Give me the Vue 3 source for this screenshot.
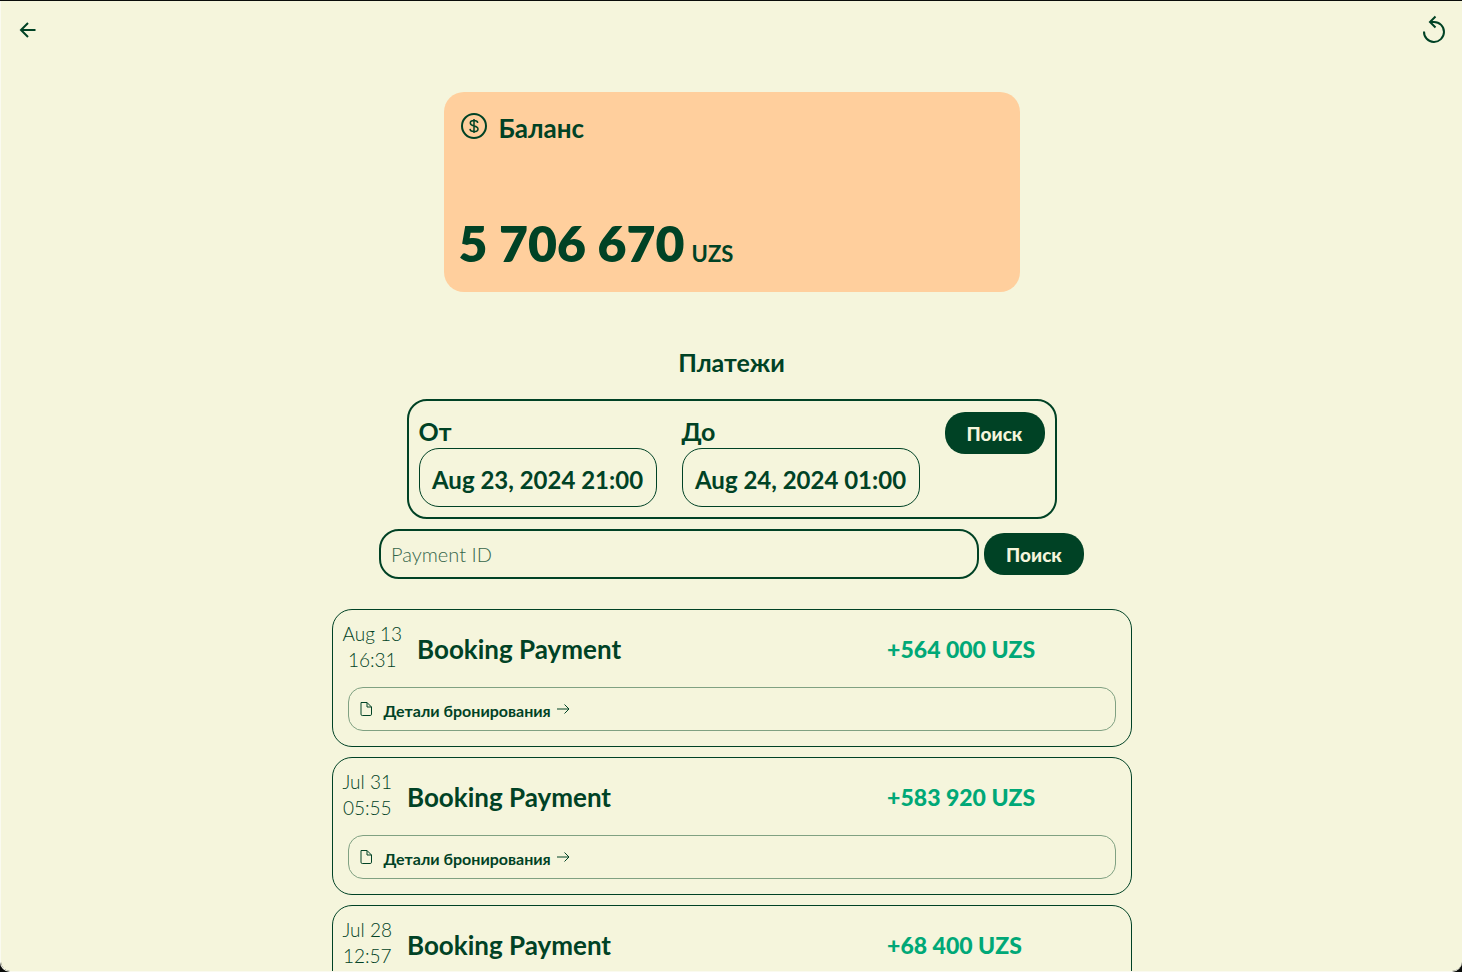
<script setup>
import { ref } from "vue";

const balance = ref("5 706 670");
const from = ref("Aug 23, 2024 21:00");
const to = ref("Aug 24, 2024 01:00");
const paymentId = ref("");

const payments = ref([
  { id: 1, day: "Aug 13", time: "16:31", amount: "+564 000 UZS" },
  { id: 2, day: "Jul 31", time: "05:55", amount: "+583 920 UZS" },
  { id: 3, day: "Jul 28", time: "12:57", amount: "+68 400 UZS" },
]);
</script>

<template>
  <div class="page">
    <header class="topbar">
      <button type="button" class="icon-btn" aria-label="Назад">
        <svg width="20" height="20" viewBox="0 0 20 20">
          <path d="M18.5 10H4M11 3L4 10L11 17" />
        </svg>
      </button>
      <button type="button" class="icon-btn" aria-label="Обновить">
        <svg width="28" height="30" viewBox="0 0 28 30">
          <path d="M4 16.5A10 10 0 1 0 14 6.9H10.5M15.5 1.5L10 7L15.5 12.5" />
        </svg>
      </button>
    </header>

    <main class="content">
      <section class="balance">
        <div class="balance-head">
          <svg width="28" height="28" viewBox="0 0 28 28">
            <circle cx="14" cy="14" r="12" />
            <path
              class="thin"
              d="M14 7V21M17.8 10.8C17.5 9.4 16 8.6 14 8.6C11.8 8.6 10.3 9.5 10.3 11C10.3 12.8 11.8 13.4 14 13.9C16.4 14.4 18 15.1 18 16.9C18 18.5 16.3 19.5 14 19.5C11.7 19.5 10.1 18.5 10 16.9"
            />
          </svg>
          <span>Баланс</span>
        </div>
        <p class="balance-sum">
          <span>{{ balance }}</span>
          <span class="currency">UZS</span>
        </p>
      </section>

      <h2 class="title">Платежи</h2>

      <form class="filter" @submit.prevent>
        <div class="field">
          <label for="from">От</label>
          <input id="from" v-model="from" type="text" />
        </div>
        <div class="field">
          <label for="to">До</label>
          <input id="to" v-model="to" type="text" />
        </div>
        <button type="submit" class="btn">Поиск</button>
      </form>

      <form class="search" @submit.prevent>
        <input
          v-model="paymentId"
          type="text"
          placeholder="Payment ID"
          aria-label="Payment ID"
        />
        <button type="submit" class="btn">Поиск</button>
      </form>

      <div class="list">
        <article v-for="item in payments" :key="item.id" class="payment">
          <div class="payment-row">
            <div class="date">
              <span>{{ item.day }}</span>
              <span>{{ item.time }}</span>
            </div>
            <h3 class="name">Booking Payment</h3>
            <span class="amount">{{ item.amount }}</span>
          </div>
          <a href="#" class="details">
            <svg width="16" height="16" viewBox="0 0 16 16">
              <path
                d="M3 1.5H9L13.5 6V13.2Q13.5 14.5 12.2 14.5H4.3Q3 14.5 3 13.2ZM9 1.5V6H13.5"
              />
            </svg>
            <span>Детали бронирования</span>
            <svg class="arrow" width="14" height="14" viewBox="0 0 14 14">
              <path d="M1 7H13M8.5 2.5L13 7L8.5 11.5" />
            </svg>
          </a>
        </article>
      </div>
    </main>
  </div>
</template>

<style>
body {
  background: #0a0c0a;
}
</style>

<style scoped>
.page {
  box-sizing: border-box;
  height: calc(100vh - 1px);
  margin-top: 1px;
  overflow-y: auto;
  scrollbar-width: none;
  border-left: 1px solid #fafaf0;
  border-bottom: 1px solid #fafaf0;
  border-radius: 0 0 10px 10px;
  background: #f5f5dc;
  color: #004225;
  font-family: Lato, "Liberation Sans", sans-serif;
  font-size: 26px;
  font-weight: 700;
}

svg {
  display: block;
  flex: none;
  fill: none;
  stroke: currentColor;
  stroke-width: 2;
}

input,
button {
  box-sizing: border-box;
  font-family: inherit;
  color: inherit;
  outline: none;
}

.topbar {
  display: flex;
  justify-content: space-between;
  align-items: center;
  height: 58px;
  padding: 0 14px 0 16px;
}

.icon-btn {
  padding: 0;
  border: none;
  background: none;
  cursor: pointer;
}

.content {
  display: flex;
  flex-direction: column;
  align-items: center;
  padding: 33px 16px 16px;
}

.balance {
  box-sizing: border-box;
  display: flex;
  flex-direction: column;
  justify-content: space-between;
  width: 100%;
  max-width: 576px;
  height: 200px;
  padding: 20px 15px 10px;
  border-radius: 20px;
  background: #ffcf9d;
}

.balance-head {
  display: flex;
  align-items: flex-start;
  gap: 11px;
  padding-left: 1px;
  line-height: 32px;
}

.thin {
  stroke-width: 1.5;
}

.balance-sum {
  display: flex;
  align-items: baseline;
  gap: 7px;
  margin: 0;
  font-size: 50px;
  font-weight: 800;
  line-height: 56px;
}

.currency {
  font-size: 22px;
  font-weight: 700;
}

.title {
  margin: 54px 0 21px;
  font-size: 25px;
  font-weight: 700;
  line-height: 32px;
}

.filter {
  display: flex;
  align-items: flex-start;
  gap: 25px;
  padding: 11px 10px 10px;
  border: 2px solid #004225;
  border-radius: 20px;
}

.field {
  display: flex;
  flex-direction: column;
}

.field label {
  padding-top: 2px;
  font-size: 25px;
  line-height: 34px;
}

.field input {
  width: 238px;
  height: 59px;
  padding: 4px 0 0;
  border: 1px solid #004225;
  border-radius: 20px;
  background: transparent;
  font-size: 24px;
  font-weight: 700;
  text-align: center;
}

.btn {
  width: 100px;
  height: 42px;
  padding: 1px 0 0;
  border: none;
  border-radius: 20px;
  background: #004225;
  color: #f5f5dc;
  font-size: 19px;
  font-weight: 900;
  cursor: pointer;
}

.search {
  display: flex;
  align-items: center;
  justify-content: center;
  gap: 5px;
  width: 100%;
  margin-top: 10px;
}

.search input {
  flex: 0 1 600px;
  min-width: 0;
  height: 50px;
  padding: 0 10px;
  border: 2px solid #004225;
  border-radius: 20px;
  background: transparent;
  font-size: 20px;
  font-weight: 300;
}

.search input::placeholder {
  color: #004225;
  opacity: 0.8;
}

.list {
  display: flex;
  flex-direction: column;
  gap: 10px;
  width: 100%;
  max-width: 800px;
  margin-top: 30px;
}

.payment {
  border: 1px solid #004225;
  border-radius: 20px;
}

.payment-row {
  display: flex;
  align-items: center;
  gap: 15px;
  padding: 11px 10px 0;
}

.date {
  display: flex;
  flex-direction: column;
  align-items: center;
  font-size: 19px;
  font-weight: 300;
  line-height: 26px;
}

.name {
  flex: 1;
  margin: 0;
  padding-top: 3px;
  font-size: 26px;
  font-weight: 700;
}

.amount {
  flex: 0 0 30%;
  padding-top: 3px;
  color: #00a877;
  font-size: 23px;
  font-weight: 900;
}

.details {
  display: flex;
  align-items: center;
  height: 42px;
  margin: 14px 15px 15px;
  padding: 0 9px;
  border: 1px solid #80a182;
  border-radius: 15px;
  color: inherit;
  font-size: 16px;
  font-weight: 700;
  line-height: 20px;
  text-decoration: none;
}

.details svg {
  stroke-width: 1;
}

.details span {
  margin-left: 10px;
  padding-top: 4px;
}

.details .arrow {
  margin-left: 5px;
}
</style>
